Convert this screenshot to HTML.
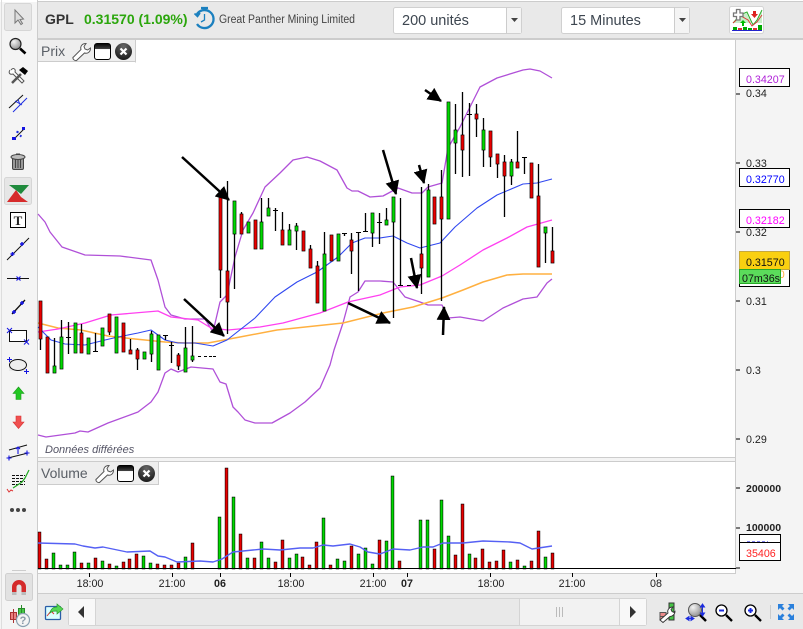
<!DOCTYPE html>
<html><head><meta charset="utf-8"><style>
html,body{margin:0;padding:0;background:#f4f4f4;width:803px;height:629px;overflow:hidden}
svg{display:block;font-family:"Liberation Sans",sans-serif}
</style></head><body>
<svg width="803" height="629" viewBox="0 0 803 629" xmlns="http://www.w3.org/2000/svg">
<defs>
<marker id="ah" markerUnits="userSpaceOnUse" markerWidth="16" markerHeight="14" refX="13" refY="7" orient="auto"><path d="M0 0L14 7L0 14Z" fill="#000"/></marker>
<linearGradient id="win" x1="0" y1="0" x2="0" y2="1"><stop offset="0" stop-color="#000"/><stop offset=".35" stop-color="#444"/><stop offset=".36" stop-color="#fff"/></linearGradient>
<radialGradient id="cl" cx=".5" cy=".2" r=".9"><stop offset="0" stop-color="#666"/><stop offset="1" stop-color="#111"/></radialGradient>
<radialGradient id="gl" cx=".35" cy=".3" r=".8"><stop offset="0" stop-color="#f4f4f4"/><stop offset="1" stop-color="#888"/></radialGradient>
<path id="gb" d="M53.500 366.500h2v6h-2zM60.500 337.500h2v31h-2zM74.500 323.500h2v29h-2zM87.500 338.500h2v15h-2zM101.500 328.500h2v17h-2zM115.500 317.500h2v35h-2zM143.500 352.500h2v6h-2zM150.500 334.500h2v19h-2zM157.500 335.500h2v34h-2zM184.500 348.500h2v23h-2zM191.500 356.500h2v3h-2zM233.500 201.500h2v32h-2zM247.500 222.500h2v10h-2zM260.500 222.500h2v26h-2zM267.500 208.500h2v7h-2zM288.500 230.500h2v14h-2zM295.500 226.500h2v4h-2zM323.500 254.500h2v56h-2zM337.500 234.500h2v26h-2zM371.500 213.500h2v19h-2zM385.500 220.500h2v4h-2zM392.500 197.500h2v24h-2zM427.500 190.500h2v86h-2zM447.500 102.500h2v116h-2zM454.500 130.500h2v12h-2zM482.500 130.500h2v19h-2zM510.500 162.500h2v13h-2zM544.500 227.500h2v5h-2z"/>
<path id="rb" d="M39.500 301.500h2v37h-2zM46.500 337.500h2v35h-2zM80.500 333.500h2v19h-2zM108.500 314.500h2v17h-2zM122.500 323.500h2v28h-2zM129.500 350.500h2v3h-2zM136.500 350.500h2v8h-2zM177.500 355.500h2v10h-2zM219.500 197.500h2v72h-2zM226.500 271.500h2v30h-2zM240.500 214.500h2v19h-2zM254.500 220.500h2v28h-2zM281.500 230.500h2v14h-2zM302.500 231.500h2v19h-2zM309.500 249.500h2v18h-2zM316.500 266.500h2v36h-2zM330.500 235.500h2v25h-2zM350.500 240.500h2v10h-2zM420.500 254.500h2v13h-2zM433.500 197.500h2v26h-2zM440.500 197.500h2v21h-2zM461.500 135.500h2v14h-2zM475.500 114.500h2v4h-2zM489.500 131.500h2v25h-2zM496.500 154.500h2v9h-2zM503.500 162.500h2v13h-2zM516.500 162.500h2v5h-2zM530.500 163.500h2v34h-2zM537.500 196.500h2v70h-2zM551.500 251.500h2v11h-2z"/>
<path id="gv" d="M52.500 553.500h2v15h-2zM59.500 565.500h2v3h-2zM66.500 565.500h2v3h-2zM73.500 552.500h2v16h-2zM87.500 563.500h2v5h-2zM101.500 561.500h2v7h-2zM115.500 566.500h2v2h-2zM142.500 556.500h2v12h-2zM149.500 563.500h2v5h-2zM184.500 557.500h2v11h-2zM218.500 517.500h2v51h-2zM232.500 497.500h2v71h-2zM246.500 558.500h2v10h-2zM260.500 542.500h2v26h-2zM267.500 558.500h2v10h-2zM288.500 558.500h2v10h-2zM295.500 554.500h2v14h-2zM322.500 518.500h2v50h-2zM336.500 559.500h2v9h-2zM343.500 561.500h2v7h-2zM357.500 554.500h2v14h-2zM364.500 548.500h2v20h-2zM371.500 564.500h2v4h-2zM385.500 541.500h2v27h-2zM391.500 476.500h2v92h-2zM419.500 520.500h2v48h-2zM426.500 520.500h2v48h-2zM440.500 500.500h2v68h-2zM447.500 536.500h2v32h-2zM468.500 554.500h2v14h-2zM509.500 562.500h2v6h-2zM523.500 566.500h2v2h-2zM544.500 557.500h2v11h-2z"/>
<path id="rv" d="M38.500 532.500h2v36h-2zM45.500 559.500h2v9h-2zM80.500 563.500h2v5h-2zM94.500 558.500h2v10h-2zM108.500 564.500h2v4h-2zM122.500 562.500h2v6h-2zM128.500 559.500h2v9h-2zM135.500 554.500h2v14h-2zM156.500 564.500h2v4h-2zM163.500 565.500h2v3h-2zM170.500 565.500h2v3h-2zM177.500 563.500h2v5h-2zM191.500 543.500h2v25h-2zM225.500 468.500h2v100h-2zM239.500 534.500h2v34h-2zM253.500 558.500h2v10h-2zM274.500 562.500h2v6h-2zM281.500 540.500h2v28h-2zM301.500 557.500h2v11h-2zM308.500 565.500h2v3h-2zM315.500 542.500h2v26h-2zM329.500 565.500h2v3h-2zM350.500 546.500h2v22h-2zM378.500 540.500h2v28h-2zM398.500 561.500h2v7h-2zM433.500 549.500h2v19h-2zM454.500 555.500h2v13h-2zM461.500 504.500h2v64h-2zM474.500 558.500h2v10h-2zM481.500 549.500h2v19h-2zM488.500 562.500h2v6h-2zM495.500 561.500h2v7h-2zM502.500 550.500h2v18h-2zM516.500 560.500h2v8h-2zM530.500 561.500h2v7h-2zM537.500 531.500h2v37h-2zM551.500 553.500h2v15h-2z"/>
</defs>
<!-- backgrounds -->
<rect width="803" height="629" fill="#f4f4f4"/>
<rect x="0" y="0" width="803" height="2" fill="#fff"/>
<rect x="38" y="1" width="765" height="1" fill="#ccc"/>
<rect x="38" y="2" width="765" height="36" fill="#e9e9e9"/>
<rect x="38" y="38" width="765" height="2" fill="#ccc"/>
<rect x="38" y="40" width="698" height="417" fill="#fff"/>
<rect x="38" y="461" width="698" height="112" fill="#fff"/>
<rect x="38" y="457" width="698" height="1" fill="#ccc"/>
<rect x="38" y="461" width="698" height="1" fill="#ccc"/>
<rect x="735" y="40" width="1" height="533" fill="#ccc"/>
<rect x="38" y="573" width="698" height="1" fill="#ccc"/>
<rect x="38" y="593" width="765" height="1" fill="#ccc"/>
<rect x="38" y="594" width="765" height="35" fill="#e9e9e9"/>
<rect x="1" y="0" width="1" height="629" fill="#ddd"/>
<rect x="37" y="0" width="1" height="629" fill="#ccc"/>

<!-- header -->
<text x="45" y="24" font-size="14" font-weight="bold" fill="#333">GPL</text>
<text x="84" y="24" font-size="14" font-weight="bold" fill="#2ba60c">0.31570 (1.09%)</text>
<g fill="none" stroke="#1b80bf" stroke-width="2.300">
<path d="M196.500 15A9 9 0 1 1 197 24"/><path d="M201 8h7M204.500 8V10.500"/><path d="M204.500 14V20L201 22" stroke-width="1.300"/><path d="M194.500 13.500l3 3 2.500-3.500" stroke-width="1.700"/>
</g>
<text x="219" y="23" font-size="11.500" fill="#444" textLength="136" lengthAdjust="spacingAndGlyphs">Great Panther Mining Limited</text>

<rect x="393.500" y="7.500" width="128" height="26" rx="2" fill="#fff" stroke="#d0d0d0"/>
<rect x="507" y="8" width="14" height="25" fill="#f4f4f4"/><path d="M506.500 7.500v26" stroke="#ccc"/>
<path d="M511 18h7l-3.500 4z" fill="#444"/>
<text x="402" y="25" font-size="14.500" fill="#3d4650">200 unités</text>
<rect x="561.500" y="7.500" width="128" height="26" rx="2" fill="#fff" stroke="#d0d0d0"/>
<rect x="675" y="8" width="14" height="25" fill="#f4f4f4"/><path d="M674.500 7.500v26" stroke="#ccc"/>
<path d="M679 18h7l-3.500 4z" fill="#444"/>
<text x="570" y="25" font-size="14.500" fill="#3d4650">15 Minutes</text>

<rect x="729.500" y="6.500" width="34" height="27" rx="2" fill="#fff" stroke="#d4d4d4"/>
<path d="M733 23L740 15L747 12L753 25L757 20L762 10V23Z" fill="#c8eec8"/>
<path d="M733 23L740 15L747 12L753 25L757 20L762 10" fill="none" stroke="#2a2" stroke-width=".9"/>
<path d="M733 23L741 16L748 20L752 26L757 22L762 15" fill="none" stroke="#d33" stroke-width=".9"/>
<path d="M736.500 9.500h3.500v3.500h3v3.500h-3v3.500h-3.500v-3.500h-3v-3.500h3z" fill="#fff" stroke="#777" stroke-width="1.300"/>
<path d="M740 23l3-3 3 3h-2v3h-2v-3z" fill="#0b0"/><path d="M753 11h3v3h2l-3.500 4-3.500-4h2z" fill="#d22"/>
<path d="M733 27h4v3h-4zM743 27h4v3h-4zM748 28h4v2h-4zM758 25h4v5h-4z" fill="#0a0"/><path d="M738 28h4v2h-4zM753 28h4v2h-4z" fill="#d33"/>
<path d="M732 30.500h30" stroke="#22c"/>

<!-- price axis -->
<g font-size="10.700" fill="#222">
<text x="746" y="97">0.34</text><text x="746" y="167">0.33</text><text x="746" y="236">0.32</text>
<text x="746" y="305">0.31</text><text x="746" y="374">0.3</text><text x="746" y="443">0.29</text>
<text x="746" y="492" font-weight="bold" font-size="10.500">200000</text><text x="746" y="531" font-weight="bold" font-size="10.500">100000</text>
</g>
<path d="M736 94h4M736 163h4M736 232h4M736 301h4M736 370h4M736 439h4M736 488h4M736 528h4M736 568h4" stroke="#000" fill="none"/>
<g stroke="#000">
<rect x="739.500" y="68.500" width="50" height="18" fill="#fff"/><rect x="739.500" y="168.500" width="50" height="18" fill="#fff"/><rect x="739.500" y="209.500" width="50" height="18" fill="#fff"/>
<rect x="739.500" y="268.500" width="50" height="18" fill="#fff"/>
</g>
<text x="746" y="278" font-size="10.700" fill="#ffb040">0.31310</text>
<rect x="739.500" y="251.500" width="50" height="18" fill="#fad010" stroke="#c6a83c"/>
<rect x="739.500" y="269.500" width="41" height="14" fill="#5bdc5b" stroke="#26a826"/>
<g font-size="10.700">
<text x="746" y="83" fill="#b020d8">0.34207</text><text x="746" y="183" fill="#00f">0.32770</text><text x="746" y="224" fill="#f0f">0.32182</text>
<text x="746" y="266" fill="#111">0.31570</text><text x="742" y="282" fill="#111">07m36s</text>
</g>
<rect x="739.500" y="534.500" width="41" height="8" fill="#fff" stroke="#000"/><path d="M747 542h21" stroke="#00d" stroke-dasharray="3 2"/>
<rect x="739.500" y="542.500" width="41" height="18" fill="#fff" stroke="#000"/>
<text x="746" y="557" font-size="10.700" fill="#f22">35406</text>

<!-- bands -->
<g fill="none" stroke-linejoin="round">
<path stroke="#b050d8" stroke-width="1.300" d="M38 214L45 222L50 232L62 247L85 255L120 256L151 260L158 280L165 307L171 315L185 319L205 319L213 332L220 302L227 295L235 257L243 230L253 213L265 187L280 173L293 160L307 157L320 161L337 170L347 188L352 191L358 191L370 197L383 196L398 188L412 193L422 193L428 187L442 183L448 148L460 127L480 87L497 78L523 70L530 69L540 71L552 78"/>
<path stroke="#b050d8" stroke-width="1.300" d="M38 435L46 437L75 433L80 431L88 432L108 423L138 412L151 402L158 392L165 373L171 369L178 372L191 367L213 369L220 382L226 384L233 407L238 412L245 420L255 423L272 423L290 413L305 402L320 388L330 365L334 350L343 323L350 297L358 292L365 281L380 281L393 282L405 297L420 302L428 305L442 305L445 312L448 318L460 317L483 321L503 308L523 299L537 297L547 283L552 279"/>
<path stroke="#ffb040" stroke-width="1.500" d="M38 323L58 328L81 330L108 336L135 339L165 342L185 343L208 343L240 337L277 330L343 323L383 313L413 307L442 298L463 290L483 282L507 275L523 274L552 274"/>
<path stroke="#ff40f0" stroke-width="1.300" d="M38 332L58 329L85 323L111 315L158 311L171 317L198 320L211 328L228 330L260 327L283 323L320 313L348 302L380 295L400 287L420 285L442 276L460 265L483 250L507 238L527 227L552 220"/>
<path stroke="#3048f0" stroke-width="1.100" d="M38 327L51 340L65 344L85 345L105 340L118 337L138 333L151 330L165 340L178 343L195 343L213 346L227 340L255 318L275 297L297 282L317 272L338 257L352 243L365 238L380 238L393 236L407 243L420 248L440 243L455 227L477 208L497 195L523 184L537 183L552 179"/>
</g>

<!-- wicks -->
<path fill="none" stroke="#000" stroke-width="1.300" d="M40.500 301V350M54.500 338V372M61.500 320V368M68.500 322V354M75.500 323V352M81.500 324V352M95.500 333V352M102.500 328V345M109.500 314V335M130.500 339V353M137.500 348V370M144.500 352V359M151.500 331V362M165.500 335V340M171.500 342V363M178.500 353V370M185.500 327V371M192.500 326V362M220.500 197V298M227.500 181V334M234.500 201V289M241.500 212V233M255.500 220V249M261.500 198V249M268.500 198V215M275.500 208V231M282.500 212V244M289.500 224V244M296.500 223V250M310.500 245V267M317.500 261V302M324.500 232V310M344.500 233V236M351.500 233V274M358.500 232V291M365.500 213V231M372.500 213V247M379.500 213V244M386.500 208V225M393.500 197V318M400.500 198V285M421.500 187V294M428.500 184V276M441.500 170V301M455.500 104V174M462.500 92V177M469.500 103V176M476.500 104V137M483.500 118V167M490.500 131V167M497.500 154V178M504.500 155V217M511.500 159V185M517.500 131V167M524.500 157V174M538.500 164V266M545.500 227V263M552.500 227V262"/>
<path fill="none" stroke="#000" d="M66 337.500h5M93 351.500h5M163 335.500h5M169 345.500h5M273 210.500h5M342 233.500h5M356 232.500h5M363 231.500h5M377 222.500h5M398 285.500h5M407 285.500h4M467 114.500h5M522 157.500h5M198 356.500h3M204 356.500h3M209 356.500h3M213 356.500h3"/>
<!-- candle bodies -->
<g fill="#000" stroke="#000" stroke-width="1.700"><use href="#gb"/><use href="#rb"/></g>
<g fill="#00d800" stroke="#00d800" stroke-width=".5"><use href="#gb"/></g>
<g fill="#e80000" stroke="#e80000" stroke-width=".5"><use href="#rb"/></g>

<!-- annotation arrows -->
<g stroke="#000" stroke-width="2.500" fill="none">
<path marker-end="url(#ah)" d="M182 157L229 200"/>
<path marker-end="url(#ah)" d="M184 299L224 336"/>
<path marker-end="url(#ah)" d="M383 150L396 194"/>
<path marker-end="url(#ah)" d="M348 303L390 323"/>
<path marker-end="url(#ah)" d="M425 90L441 101"/>
<path marker-end="url(#ah)" d="M419 165L424 183"/>
<path marker-end="url(#ah)" d="M411 258L417 288"/>
<path marker-end="url(#ah)" d="M443 335L444 307"/>
</g>

<text x="45" y="453" font-size="11" font-style="italic" fill="#556">Données différées</text>

<!-- Prix tag -->
<rect x="38" y="40" width="97" height="22" fill="#eee"/><path d="M135.500 40v22.500M38 61.500h98" stroke="#ccc" fill="none"/>
<text x="41" y="56" font-size="14" fill="#5a5f66">Prix</text>
<path d="M73 57.500l8-8c-1-3 1-6 5-6l-2 3 1 2.500 2.500 1 3-2c0 4-3 6-6 5l-8 7.500c-2 .5-4-1.500-3.500-3.500z" fill="#fff" stroke="#555" stroke-width="1"/>
<rect x="94.500" y="43.500" width="16" height="16" rx="2.500" fill="url(#win)" stroke="#000"/>
<circle cx="123.500" cy="51.500" r="8.500" fill="url(#cl)"/><path d="M120.500 48.500l6 6M126.500 48.500l-6 6" stroke="#fff" stroke-width="2.200"/>
<!-- Volume tag -->
<rect x="38" y="462" width="120" height="22" fill="#eee"/><path d="M158.500 462v22.500M38 484.500h121" stroke="#ccc" fill="none"/>
<text x="41" y="478" font-size="14" fill="#5a5f66">Volume</text>
<path d="M96 479.500l8-8c-1-3 1-6 5-6l-2 3 1 2.500 2.500 1 3-2c0 4-3 6-6 5l-8 7.500c-2 .5-4-1.500-3.500-3.500z" fill="#fff" stroke="#555" stroke-width="1"/>
<rect x="117.500" y="465.500" width="16" height="16" rx="2.500" fill="url(#win)" stroke="#000"/>
<circle cx="146.500" cy="473.500" r="8.500" fill="url(#cl)"/><path d="M143.500 470.500l6 6M149.500 470.500l-6 6" stroke="#fff" stroke-width="2.200"/>

<!-- volume bars -->
<g fill="#000" stroke="#000" stroke-width="1.400"><use href="#gv"/><use href="#rv"/></g>
<g fill="#00d800" stroke="#00d800" stroke-width=".3"><use href="#gv"/></g>
<g fill="#e80000" stroke="#e80000" stroke-width=".3"><use href="#rv"/></g>
<path d="M38 568.500h698" stroke="#000" fill="none"/>
<path fill="none" stroke="#5560f4" stroke-width="1.400" stroke-linejoin="round" d="M38 543L75 544L83 546L95 548L103 547L127 552L150 551L158 556L165 557L177 562L200 561L213 562L222 559L233 552L253 550L263 549L280 550L300 548L313 548L323 545L333 546L350 544L360 547L368 552L380 554L393 549L410 550L423 547L433 547L443 543L463 543L483 541L510 542L520 543L532 549L552 546"/>

<!-- time axis -->
<path d="M89.500 573v4M172.500 573v4M220.500 573v4M290.500 573v4M373.500 573v4M407.500 573v4M490.500 573v4M572.500 573v4M656.500 573v4" stroke="#000" fill="none"/>
<g font-size="10.700" fill="#222" text-anchor="middle">
<text x="90" y="587">18:00</text><text x="172" y="587">21:00</text><text x="220" y="587" font-weight="bold">06</text>
<text x="291" y="587">18:00</text><text x="373" y="587">21:00</text><text x="407" y="587" font-weight="bold">07</text>
<text x="491" y="587">18:00</text><text x="572" y="587">21:00</text><text x="656" y="587">08</text>
</g>

<!-- scrollbar -->
<rect x="68.500" y="598.500" width="578" height="27" rx="2" fill="#e9e9e9" stroke="#d4d4d4"/>
<rect x="69" y="599" width="26" height="26" fill="#f8f8f8"/><path d="M95.500 599v26" stroke="#d4d4d4"/>
<path d="M84 606v12l-6-6z" fill="#333"/>
<rect x="520" y="599" width="99" height="26" fill="#f2f2f2"/><path d="M519.500 599v26M619.500 599v26" stroke="#d4d4d4"/>
<rect x="620" y="599" width="26" height="26" fill="#f8f8f8"/>
<path d="M630 606v12l6-6z" fill="#333"/>
<path d="M556.500 607v10M559.500 607v10M562.500 607v10" stroke="#bbb" fill="none"/>

<!-- share icon -->
<rect x="45.500" y="606.500" width="15" height="13" rx="1" fill="#dff" stroke="#2a5ea8" stroke-width="1.300"/>
<path d="M47 616l4-5 3 3" fill="none" stroke="#d33"/>
<path d="M50 613c1-5 4-6 7-6v-3l6 5-6 5v-3c-3 0-5 0-7 2z" fill="#55d855" stroke="#2a9a2a" stroke-width=".7"/>

<!-- bottom right icons -->
<path d="M660 616.500h6v-4h-6zM660 620h6v-3.500h-6z" fill="#ec8a8a" stroke="#555"/><path d="M669 620v-17h5v17z" fill="#44c444" stroke="#333"/>
<path d="M660 620l8-7c-1-3 1-6 5-6l-2 2.500 1 2 2 1 1-1c0 3-3 5-5 5l-7 6z" fill="#fff" stroke="#333" stroke-width=".9"/>
<circle cx="695" cy="610" r="6.500" fill="url(#gl)" stroke="#555"/><path d="M700 615l6 6" stroke="#000" stroke-width="2.500"/>
<path d="M702.500 606v7M702.500 604l-2 3h4zM702.500 616l-2-3h4zM687 618.500h6M686 618.500l3-2v4zM694 618.500l-3-2v4z" stroke="#1c2ce0" fill="#1c2ce0" stroke-width="1"/>
<circle cx="721.500" cy="610.500" r="5.500" fill="#fff" stroke="#000" stroke-width="1.300"/><path d="M719 610.500h5" stroke="#1c2ce0" stroke-width="2"/><path d="M726 615l6 6" stroke="#000" stroke-width="2.300"/>
<circle cx="750.500" cy="610.500" r="5.500" fill="#fff" stroke="#000" stroke-width="1.300"/><path d="M748 610.500h5M750.500 608v5" stroke="#1c2ce0" stroke-width="2"/><path d="M755 615l6 6" stroke="#000" stroke-width="2.300"/>
<path d="M770.500 605v14" stroke="#ccc" fill="none"/>
<path d="M778 604h6l-2 2 2.500 2.500-2 2L780 608l-2 2zM794 604v6l-2-2-2.500 2.500-2-2L790 606l-2-2zM778 620v-6l2 2 2.500-2.500 2 2L782 618l2 2zM794 620h-6l2-2-2.500-2.500 2-2L792 616l2-2z" fill="#2a80dc"/>

<!-- left toolbar -->
<rect x="4.500" y="3.500" width="27" height="27" rx="2" fill="#e6e6e6" stroke="#d6d6d6"/>
<path d="M15 10v13l3-3 3 4.500 1.500-1-2.500-4 3.500-.5z" fill="#ddd" stroke="#777"/>
<circle cx="15.500" cy="44" r="5.500" fill="url(#gl)" stroke="#222" stroke-width="1.200"/><path d="M20 48.500l5.500 5" stroke="#000" stroke-width="2.600"/>
<path d="M11 70c2-3 5-1 4 2l9 9-2 2-9-9c-3 1-5-1-3-4" fill="#fff" stroke="#555"/><path d="M12 83l9-9" stroke="#555" stroke-width="2.500"/><path d="M19 70l4-3 5 4-3 4z" fill="#000"/>
<path d="M9 108L23 95" stroke="#111" fill="none"/><path d="M13 112L27 98" stroke="#1c2ce0" fill="none"/><path d="M15 101l7 4M18 99.500l2 5" stroke="#1c2ce0" fill="none"/>
<path d="M14 139l10-10" stroke="#111" fill="none"/><path d="M12 137h4v3h-4zM22 127h3v3h-3z" fill="#1414e0"/><path d="M16.500 131.500l2 1M20 135.500l1.500 1" stroke="#1c2ce0" stroke-width="2"/>
<rect x="12.500" y="157.500" width="11" height="12" rx="1.500" fill="#999" stroke="#444"/><path d="M15.500 159v9M18 159v9M20.500 159v9" stroke="#444" fill="none"/><ellipse cx="18" cy="157" rx="7" ry="2.500" fill="#bbb" stroke="#444"/><path d="M16 154h4" stroke="#444"/>
<rect x="4.500" y="177.500" width="27" height="27" rx="2" fill="#e6e6e6" stroke="#d6d6d6"/>
<path d="M9 185h20l-8 9z" fill="#1f8a3c"/><path d="M7 202l9-12 5 7 7 5z" fill="#d62a2a"/>
<rect x="10.500" y="212.500" width="15" height="15" fill="#fff" stroke="#000"/><text x="18" y="225" font-size="13" font-weight="bold" font-family="Liberation Serif,serif" text-anchor="middle" fill="#222">T</text>
<path d="M7 260L29 238" stroke="#111" fill="none"/>
<path d="M10.500 254h4M12.500 252v4M20 244h4M22 242v4" stroke="#1414e0" stroke-width="1.500" fill="none"/>
<path d="M7 278.500h22" stroke="#111" fill="none"/><path d="M16.500 276.500l4 4M20.500 276.500l-4 4" stroke="#1414e0" stroke-width="1.200" fill="none"/>
<path d="M12 314L25 300" stroke="#111" stroke-width="1.300" fill="none"/><path d="M12 312h4M14 310v4M20 303h4M22 301v4" stroke="#1414e0" stroke-width="1.500" fill="none"/>
<rect x="9.500" y="330.500" width="17" height="11" fill="#fff" stroke="#111"/><path d="M7 328l5 5M12 328l-5 5M24 339.500l5 5M29 339.500l-5 5" stroke="#1414e0" stroke-width="1" fill="none"/>
<rect x="9" y="360" width="17" height="11" fill="#e8e8e8"/><ellipse cx="18" cy="365" rx="8.500" ry="5.500" fill="#eee" stroke="#111"/><path d="M7 359.500h5M9.500 357v5M24 371.500h5M26.500 369v5" stroke="#1414e0" stroke-width="1" fill="none"/>
<path d="M18.500 387l5.500 6.500h-3v6h-5v-6h-3z" fill="#22c822" stroke="#1a9a1a" stroke-width=".6"/>
<path d="M16 416h5v6h3l-5.500 6.500L13 422h3z" fill="#f05050" stroke="#d83030" stroke-width=".6"/>
<path d="M9 450L27 445M8 458L28 453" stroke="#111" fill="none"/><path d="M6.500 458h5M9 455.500v5M24.500 453h5M27 450.500v5M18 447v7M16 449l2-2 2 2" stroke="#1414e0" stroke-width="1.100" fill="none"/>
<path d="M12 475.500h13M12 478.500h13M12 481.500h13M12 484.500h13" stroke="#111" fill="none" stroke-dasharray="3 1"/>
<path d="M7 489l2 3 2-2 2 1" fill="none" stroke="#d33" stroke-width="1"/><path d="M13 488L22 482L25 478L29 470" fill="none" stroke="#2a2" stroke-width="1.200"/>
<circle cx="12" cy="510" r="2" fill="#444"/><circle cx="18" cy="510" r="2" fill="#444"/><circle cx="24" cy="510" r="2" fill="#444"/>
<path d="M12 570.500h14" stroke="#ccc" fill="none"/>
<rect x="5.500" y="573.500" width="27" height="27" rx="2" fill="#e2e2e2" stroke="#d0d0d0"/>
<path d="M12 595v-8a7 7 0 0 1 14 0v8h-4.500v-8a2.500 2.500 0 0 0-5 0v8z" fill="#d42a2a"/><path d="M12 592h4.500v3H12zM21.500 592H26v3h-4.500z" fill="#bbb"/>
<rect x="10.500" y="612.500" width="6" height="7" fill="#ec8080" stroke="#a33"/><path d="M13.500 609v14" stroke="#a33" fill="none"/>
<rect x="18.500" y="608.500" width="6" height="8" fill="#45c845" stroke="#2a8a2a"/><path d="M21.500 605v14" stroke="#2a8a2a" fill="none"/>
<circle cx="23" cy="620" r="6.500" fill="#f4f4f4" stroke="#8aa0b0" stroke-width="1.200"/><text x="23" y="624" font-size="11" font-weight="bold" text-anchor="middle" fill="#8a9aa8">?</text>
</svg>
</body></html>
